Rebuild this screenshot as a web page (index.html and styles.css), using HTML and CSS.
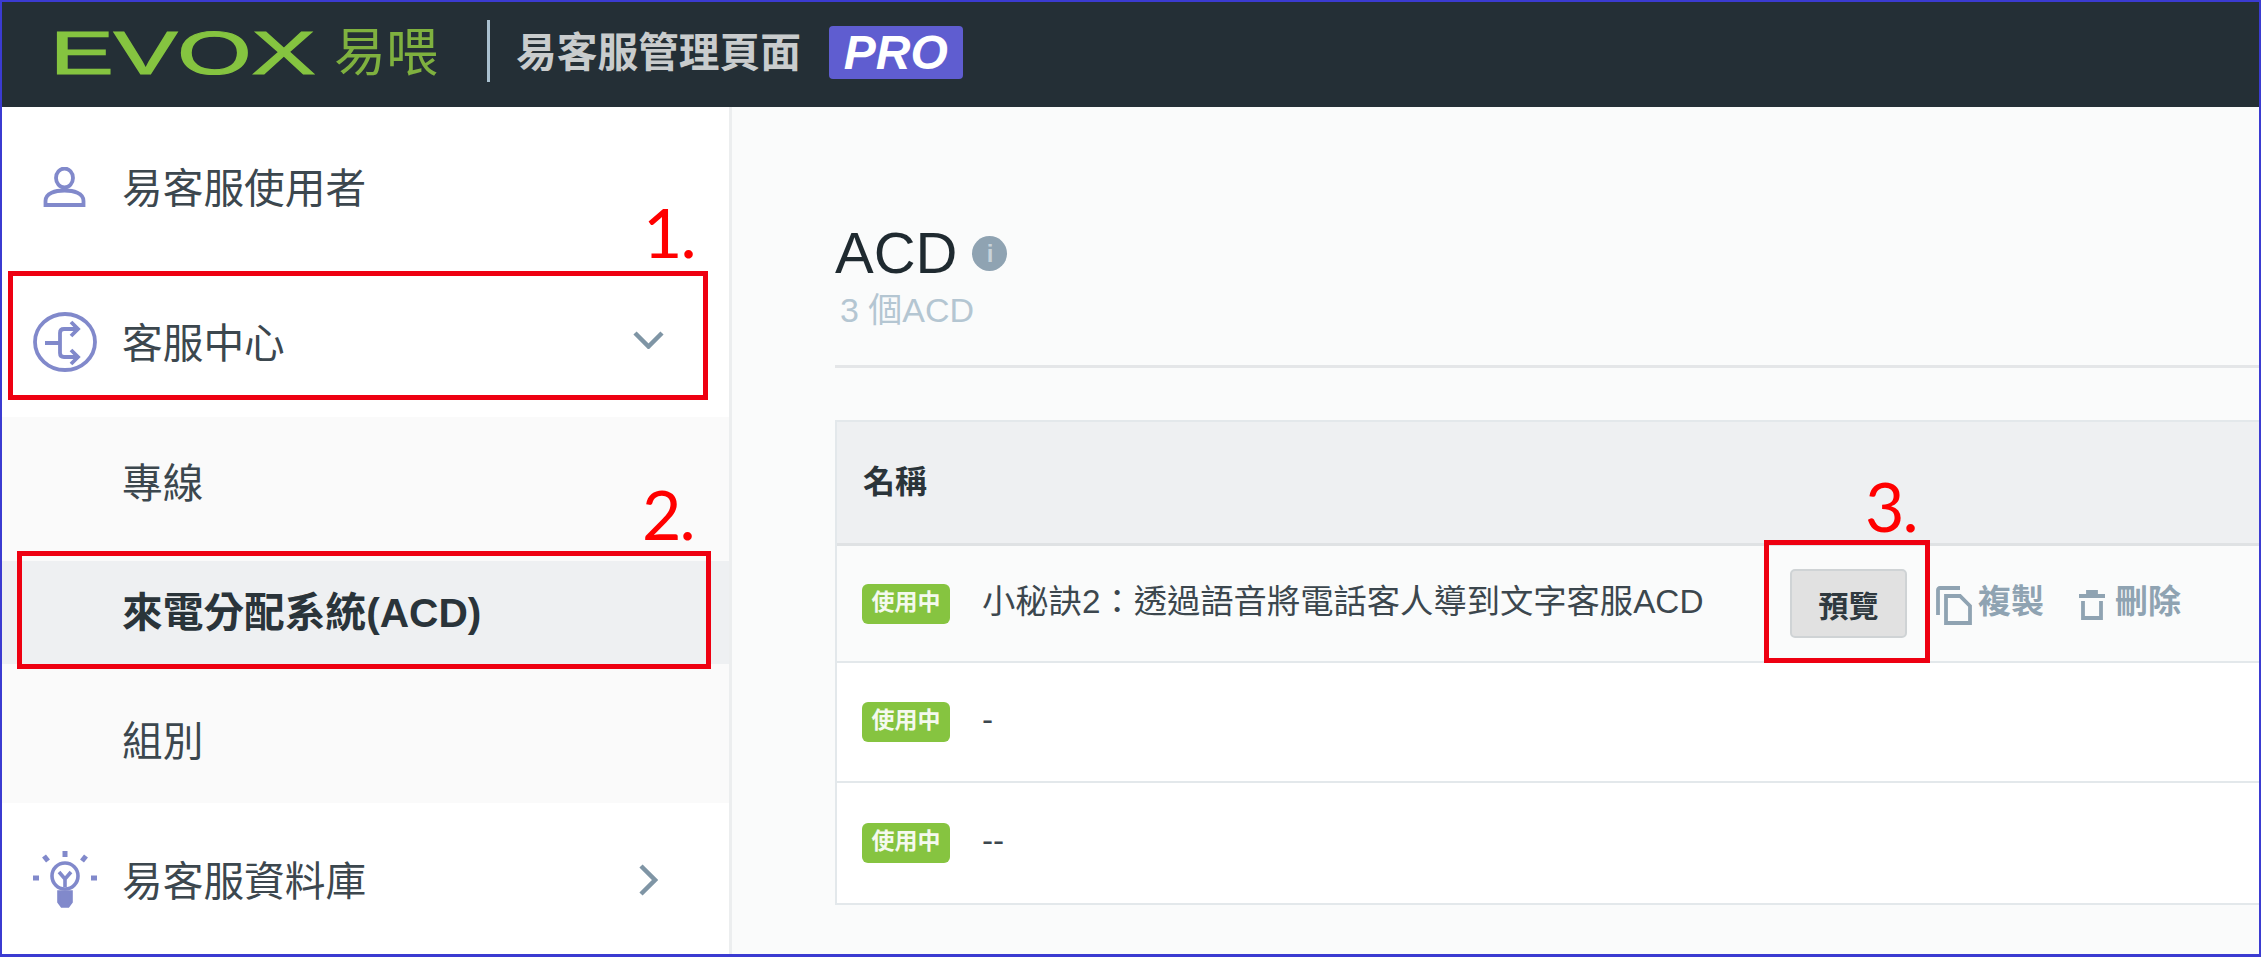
FILE: index.html
```html
<!DOCTYPE html>
<html lang="zh-Hant">
<head>
<meta charset="utf-8">
<title>易客服管理頁面</title>
<link rel="stylesheet" href="styles.css">
</head>
<body>
<div class="frame">
  <header class="topbar">
    <div class="logo"><span class="logo-word">EVOX</span><span class="logo-cjk">易喂</span></div>
    <span class="divider"></span>
    <span class="app-title">易客服管理頁面</span>
    <span class="pro">PRO</span>
  </header>
  <div class="body">
    <aside class="sidebar">
      <a class="nav-item first">
        <svg class="icon-user" viewBox="0 0 43 40" fill="none" stroke="#8189cb" stroke-width="3.800"><ellipse cx="21.500" cy="11" rx="8.500" ry="9.500"/><path d="M2.500 38v-4c0-8 10-10.500 19-10.500s19 2.500 19 10.500v4z"/></svg>
        <span class="nav-label">易客服使用者</span>
      </a>
      <a class="nav-item">
        <svg class="icon-nav" viewBox="0 0 64 60" fill="none" stroke="#8189cb" stroke-width="3.800"><ellipse cx="32" cy="30" rx="30" ry="28"/><path d="M12 31H27M27 31V21q0-4 4-4H44M38 10l7 7-7 7M27 31V41q0 4 4 4H44M38 38l7 7-7 7"/></svg>
        <span class="nav-label">客服中心</span>
        <svg class="chev-down" viewBox="0 0 31 18" fill="none" stroke="#7f95a5" stroke-width="4.500"><path d="M2 2l13.500 13.500L29 2"/></svg>
      </a>
      <div class="submenu">
        <a class="sub-item">專線</a>
        <a class="sub-item active">來電分配系統(ACD)</a>
        <a class="sub-item">組別</a>
      </div>
      <a class="nav-item">
        <svg class="icon-nav" viewBox="0 0 64 58" fill="none" stroke="#8189cb" stroke-width="3.600"><circle cx="32" cy="25" r="13"/><path d="M26 21l6 7 6-7M32 28v8"/><path d="M26 41h12v10l-3 4h-6l-3-4z" fill="#8189cb"/><path d="M32 0v6M11 5l4 5M53 5l-4 5M0 27h6M58 27h6" stroke-width="5"/></svg>
        <span class="nav-label">易客服資料庫</span>
        <svg class="chev-right" viewBox="0 0 20 32" fill="none" stroke="#7f95a5" stroke-width="4.500"><path d="M3 2l14 14L3 30"/></svg>
      </a>
    </aside>
    <main class="content">
      <h1 class="title">ACD<span class="info">i</span></h1>
      <p class="count">3 個ACD</p>
      <hr class="rule">
      <section class="table">
        <div class="thead">名稱</div>
        <div class="row hover">
          <span class="badge">使用中</span>
          <span class="name">小秘訣2：透過語音將電話客人導到文字客服ACD</span>
          <button class="preview">預覽</button>
          <span class="action copy">
            <svg class="icon-copy" viewBox="0 0 36 39" fill="none" stroke="#8fa3b2" stroke-width="3.800"><path d="M2 29V4q0-2 2-2H24"/><path d="M10 37V10H24L34 20V37z"/></svg>複製
          </span>
          <span class="action">
            <svg class="icon-trash" viewBox="0 0 26 30" fill="none" stroke="#8fa3b2" stroke-width="3.800"><path d="M0 6H26M9 6V2H17V6"/><path d="M4 11V28H22V11"/></svg>刪除
          </span>
        </div>
        <div class="row">
          <span class="badge">使用中</span>
          <span class="name">-</span>
        </div>
        <div class="row">
          <span class="badge">使用中</span>
          <span class="name">--</span>
        </div>
      </section>
    </main>
  </div>
  <div class="mark box-one"></div>
  <div class="mark box-two"></div>
  <div class="mark box-three"></div>
  <span class="step step-one">1.</span>
  <span class="step step-two">2.</span>
  <span class="step step-three">3.</span>
</div>
</body>
</html>
```
FILE: styles.css
```css
* { box-sizing: border-box; }
html, body { margin: 0; padding: 0; }
body {
  font-family: "Liberation Sans", "Noto Sans CJK TC", sans-serif;
  color: #3c474e;
  background: #fff;
}
.frame {
  position: relative;
  width: 2261px;
  height: 957px;
  border: 2px solid #3b3bd1;
  border-bottom-width: 3px;
  overflow: hidden;
  display: flex;
  flex-direction: column;
}

/* top bar */
.topbar {
  flex: 0 0 105px;
  height: 105px;
  background: #242f36;
  display: flex;
  align-items: center;
  padding-left: 48px;
}
.logo {
  display: flex;
  align-items: center;
  height: 60px;
  margin-top: -4px;
}
.logo-word {
  display: inline-block;
  width: 284px;
  font-size: 62px;
  line-height: 60px;
  color: #85c440;
  -webkit-text-stroke: 1.200px #85c440;
  transform: scaleX(1.54);
  transform-origin: left center;
}
.logo-cjk {
  font-size: 52px;
  line-height: 60px;
  color: #7fb13f;
  font-weight: 400;
}
.divider {
  width: 3px;
  height: 62px;
  margin-left: 49px;
  margin-right: 26px;
  margin-top: -8px;
  background: #a9c0cf;
}
.app-title {
  font-size: 40.700px;
  line-height: 50px;
  font-weight: 700;
  color: #c9cccd;
  margin-top: -4px;
}
.pro {
  margin-left: 28px;
  margin-top: -5px;
  width: 134px;
  height: 53px;
  border-radius: 4px;
  background: #5f5dd0;
  color: #fff;
  font-size: 48px;
  line-height: 53px;
  font-weight: 700;
  font-style: italic;
  text-align: center;
}

/* layout */
.body {
  flex: 1;
  display: flex;
  min-height: 0;
}
.sidebar {
  flex: 0 0 730px;
  background: #fff;
  border-right: 3px solid #eceeef;
  padding-top: 5px;
  display: flex;
  flex-direction: column;
}
.nav-item {
  flex: 0 0 150px;
  display: flex;
  align-items: center;
  padding-left: 31px;
}
.nav-item.first { margin-bottom: 5px; padding-left: 41px; }
.nav-label {
  font-size: 40.700px;
  line-height: 50px;
  margin-left: 25px;
  margin-top: 3px;
}
.first .nav-label { margin-left: 36px; }
.icon-user { width: 43px; height: 40px; margin-top: -1px; }
.icon-nav { width: 64px; height: 60px; }
.chev-down {
  width: 31px;
  height: 18px;
  margin-left: auto;
  margin-right: 65px;
  margin-top: -4px;
}
.chev-right {
  width: 20px;
  height: 32px;
  margin-left: auto;
  margin-right: 71px;
}
.submenu {
  flex: 0 0 385px;
  background: #fafafa;
  padding: 15px 0 10px;
  display: flex;
  flex-direction: column;
  gap: 26px;
  margin-bottom: 2px;
}
.sub-item {
  flex: 0 0 103px;
  display: flex;
  align-items: center;
  padding-left: 120px;
  font-size: 40.700px;
  line-height: 50px;
}
.sub-item.active {
  background: #eef0f2;
  font-weight: 700;
  color: #2a343a;
}

/* content */
.content {
  flex: 1;
  min-width: 0;
  background: #fafbfb;
  padding: 116px 0 0 103px;
}
.title {
  margin: 0;
  font-size: 58px;
  line-height: 60px;
  font-weight: 400;
  color: #1f2a30;
  display: flex;
  align-items: center;
}
.info {
  width: 35px;
  height: 35px;
  margin-left: 15px;
  margin-top: 0;
  border-radius: 50%;
  background: #8fa3b2;
  color: #c8d3da;
  font-size: 24px;
  line-height: 35px;
  font-weight: 700;
  text-align: center;
}
.count {
  margin: 0;
  padding-left: 5px;
  font-size: 34px;
  line-height: 54px;
  color: #b4c6d2;
}
.rule {
  margin: 28px 0 0;
  border: 0;
  height: 3px;
  background: #e4e6e8;
}
.table {
  margin-top: 52px;
  border: 2px solid #e3e8eb;
  border-right: 0;
  background: #fff;
}
.thead {
  height: 124px;
  padding-left: 26px;
  padding-bottom: 8px;
  display: flex;
  align-items: center;
  background: #eef0f2;
  border-bottom: 3px solid #dfe2e4;
  font-size: 32px;
  font-weight: 700;
  color: #2a343a;
}
.row {
  height: 120px;
  display: flex;
  align-items: center;
  padding-left: 25px;
  border-bottom: 2px solid #e3e8eb;
}
.row:last-child { border-bottom: 0; }
.row.hover { height: 117px; background: #fafbfb; }
.badge {
  flex: 0 0 88px;
  height: 40px;
  border-radius: 6px;
  background: #86c440;
  color: #f4f9ee;
  font-size: 23px;
  line-height: 36px;
  font-weight: 700;
  text-align: center;
}
.name {
  flex: 0 0 840px;
  padding-left: 32px;
  font-size: 33.300px;
  line-height: 44px;
  margin-top: -4px;
}
.preview {
  flex: 0 0 117px;
  height: 69px;
  padding: 0;
  border: 2px solid #cfd3d5;
  border-radius: 5px;
  background: #e1e1e1;
  font-family: inherit;
  font-size: 30px;
  font-weight: 700;
  color: #2f393f;
}
.action {
  display: flex;
  align-items: center;
  font-size: 33px;
  line-height: 44px;
  font-weight: 700;
  color: #8fa3b2;
  margin-top: -4px;
}
.copy { margin-left: 29px; margin-right: 35px; }
.icon-copy { width: 36px; height: 39px; margin-right: 6px; margin-top: 8px; }
.icon-trash { width: 26px; height: 30px; margin-right: 10px; margin-top: 6px; }

/* annotations laid over the screenshot */
.mark {
  position: absolute;
  border: 5px solid #ee0011;
}
.box-one { left: 6px; top: 269px; width: 700px; height: 129px; }
.box-two { left: 15px; top: 549px; width: 694px; height: 118px; }
.box-three { left: 1762px; top: 538px; width: 166px; height: 123px; }
.step {
  position: absolute;
  font-family: Lato, "Liberation Sans", sans-serif;
  font-size: 68px;
  line-height: 68px;
  color: #ff0000;
  letter-spacing: -2px;
}
.step-one { left: 641px; top: 196px; }
.step-two { left: 640px; top: 478px; }
.step-three { left: 1863px; top: 470px; }
```
